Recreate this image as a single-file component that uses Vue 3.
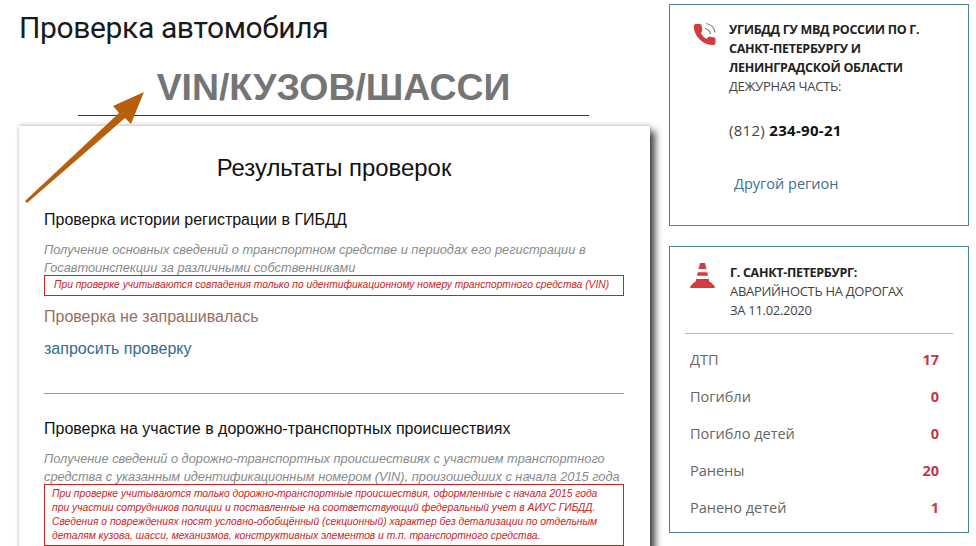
<template>
  <div class="page">
    <main class="main">
      <h1 class="title">Проверка автомобиля</h1>
      <div class="vin">VIN/КУЗОВ/ШАССИ</div>

      <section class="results">
        <h2 class="results-title">Результаты проверок</h2>

        <article class="check">
          <h3 class="check-title">Проверка истории регистрации в ГИБДД</h3>
          <p class="check-desc">
            Получение основных сведений о транспортном средстве и периодах его регистрации в
            Госавтоинспекции за различными собственниками
          </p>
          <p class="notice">
            При проверке учитываются совпадения только по идентификационному номеру транспортного средства (VIN)
          </p>
          <p class="status">Проверка не запрашивалась</p>
          <a class="request" href="#">запросить проверку</a>
        </article>

        <article class="check check--next">
          <h3 class="check-title">Проверка на участие в дорожно-транспортных происшествиях</h3>
          <p class="check-desc">
            Получение сведений о дорожно-транспортных происшествиях с участием транспортного
            средства с указанным идентификационным номером (VIN), произошедших с начала 2015 года
          </p>
          <p class="notice notice--long">
            При проверке учитываются только дорожно-транспортные происшествия, оформленные с начала 2015 года<br />
            при участии сотрудников полиции и поставленные на соответствующий федеральный учет в АИУС ГИБДД.<br />
            Сведения о повреждениях носят условно-обобщённый (секционный) характер без детализации по отдельным<br />
            деталям кузова, шасси, механизмов, конструктивных элементов и т.п. транспортного средства.
          </p>
        </article>
      </section>

      <svg class="arrow" width="130" height="120" viewBox="0 0 130 120">
        <path d="M3 109 L97 21 L91 14 L122 0 L109 32 L103 26 L5 111 Z" fill="#b85f0c" />
      </svg>
    </main>

    <aside class="side">
      <section class="box box--phone">
        <svg class="icon" width="26" height="28" viewBox="0 0 26 28">
          <path
            d="M7.600 13.300c1.500 3 4 5.500 7 7l2.300-2.300c.3-.3.7-.4 1.100-.3 1.200.4 2.100.6 3.400.6.600 0 1 .5 1 1v3.700c0 .6-.5 1-1 1-9.900 0-18.500-8.200-18.500-18 0-.6.500-1 1-1h3.700c.6 0 1 .5 1 1 0 1.300.2 2.600.6 3.800.1.400 0 .8-.3 1.100z"
            fill="#d23c3c"
            stroke="#d23c3c"
            stroke-width="2.200"
            stroke-linejoin="round"
          />
          <path d="M13 8.500 C16 9 18 11 18.500 14" fill="none" stroke="#777" stroke-width="1.200" />
          <path d="M14 3.500 C19 4.500 22.500 8 23 12.500" fill="none" stroke="#888" stroke-width="1.200" />
        </svg>
        <div class="box-text">
          <b class="org">УГИБДД ГУ МВД РОССИИ ПО Г. САНКТ-ПЕТЕРБУРГУ И ЛЕНИНГРАДСКОЙ ОБЛАСТИ</b>
          <div>ДЕЖУРНАЯ ЧАСТЬ:</div>
          <div class="phone">(812) <b>234-90-21</b></div>
          <a class="region" href="#">Другой регион</a>
        </div>
      </section>

      <section class="box box--stats">
        <div class="stats-head">
          <svg class="icon" width="26" height="26" viewBox="0 0 26 26">
            <path d="M10 0 H15 L19.500 19 H5.500 Z" fill="#d23c3c" />
            <path d="M8.500 6 H16.500 L17.300 9.200 H7.700 Z M6.900 12.800 H18.100 L18.900 16 H6.100 Z" fill="#fff" />
            <path d="M4.500 19 H20.500 L24.500 23 Q25.500 25 24 25 H1 Q-.5 25 .5 23 Z" fill="#d23c3c" />
          </svg>
          <div class="box-text">
            <b class="org">Г. САНКТ-ПЕТЕРБУРГ:</b>
            <div>АВАРИЙНОСТЬ НА ДОРОГАХ</div>
            <div>ЗА 11.02.2020</div>
          </div>
        </div>
        <ul class="stats">
          <li v-for="row in stats" :key="row.label" class="stat">
            <span>{{ row.label }}</span>
            <b class="stat-value">{{ row.value }}</b>
          </li>
        </ul>
      </section>
    </aside>
  </div>
</template>

<script setup>
const stats = [
  { label: "ДТП", value: 17 },
  { label: "Погибли", value: 0 },
  { label: "Погибло детей", value: 0 },
  { label: "Ранены", value: 20 },
  { label: "Ранено детей", value: 1 },
];
</script>

<style>
html,
body {
  background: #fff;
  overflow: hidden;
}
</style>

<style scoped>
.page {
  display: flex;
  height: 546px;
  overflow: hidden;
  background: #fff;
}

.main {
  position: relative;
  width: 631px;
  margin-left: 19px;
  flex: none;
}

.title {
  margin: 10px 0 0;
  font: 400 30px/36px Roboto, sans-serif;
  letter-spacing: -.37px;
  color: #1a1a1a;
}

.vin {
  width: 511px;
  margin: 20px 0 0 59px;
  padding-bottom: 7px;
  border-bottom: 1px solid #6b1f1f;
  text-align: center;
  font: 700 37.400px/42px "Liberation Sans", sans-serif;
  color: #757575;
}

.results {
  margin-top: 10px;
  height: 440px;
  padding: 0 26px 0 25px;
  background: #fff;
  box-shadow: 5px 5px 7px #444, 0 -1px 4px #ccc;
  font-family: "Liberation Sans", sans-serif;
}

.results-title {
  margin: 0;
  padding-top: 27px;
  text-align: center;
  font-size: 23.900px;
  line-height: 30px;
  font-weight: 400;
  color: #111;
}

.check {
  margin-top: 27px;
  padding-bottom: 34px;
  border-bottom: 1px solid #999;
}

.check--next {
  margin-top: 25px;
  border-bottom: 0;
}

.check-title {
  margin: 0;
  font-size: 16px;
  line-height: 20px;
  font-weight: 400;
  color: #111;
}

.check-desc {
  margin: 11px 0 0;
  font-size: 12.800px;
  line-height: 18px;
  font-style: italic;
  color: #8a8a8a;
}

.notice {
  margin: -2px 0 0;
  padding: 0 9px;
  height: 19px;
  border: 1px solid #c22;
  font-size: 10.250px;
  line-height: 18px;
  font-style: italic;
  color: #c22;
  white-space: nowrap;
}

.notice--long {
  height: auto;
  padding: 2px 7px;
  font-size: 10.300px;
  line-height: 14px;
}

.status {
  margin: 11px 0 0;
  font-size: 16px;
  line-height: 20px;
  color: #966f5e;
}

.request {
  display: block;
  margin-top: 12px;
  font-size: 16px;
  line-height: 20px;
  color: #2f6c8f;
  text-decoration: none;
}

.arrow {
  position: absolute;
  left: 3px;
  top: 92px;
}

.side {
  width: 300px;
  margin-left: 19px;
  padding-top: 4px;
  flex: none;
  font-family: "Open Sans", sans-serif;
  font-size: 13px;
  color: #444;
}

.box {
  box-sizing: border-box;
  width: 300px;
  border: 1px solid #4a8598;
}

.box--phone {
  display: flex;
  gap: 11px;
  height: 222px;
  padding: 15px 22px;
}

.box--stats {
  height: 287px;
  margin-top: 20px;
  padding: 16px 15px 0;
}

.stats-head {
  display: flex;
  gap: 14px;
  padding: 0 6px 13px 5px;
  border-bottom: 1px solid #a9c0c8;
}

.icon {
  flex: none;
}

.box-text {
  line-height: 19px;
  letter-spacing: -.3px;
  min-width: 0;
}

.org {
  display: block;
  font-size: 12.500px;
  color: #222;
}

.phone {
  margin-top: 25px;
  font-size: 15px;
  letter-spacing: .3px;
}

.phone b {
  color: #111;
}

.region {
  display: block;
  margin: 34px 0 0 5px;
  font-size: 14.500px;
  letter-spacing: 0;
  color: #3a7090;
  text-decoration: none;
}

.stats {
  margin: 0;
  padding: 7px 14px 0 5px;
  list-style: none;
}

.stat {
  display: flex;
  justify-content: space-between;
  height: 37px;
  align-items: center;
  font-size: 14.500px;
  color: #666;
}

.stat-value {
  color: #c0394b;
}
</style>
